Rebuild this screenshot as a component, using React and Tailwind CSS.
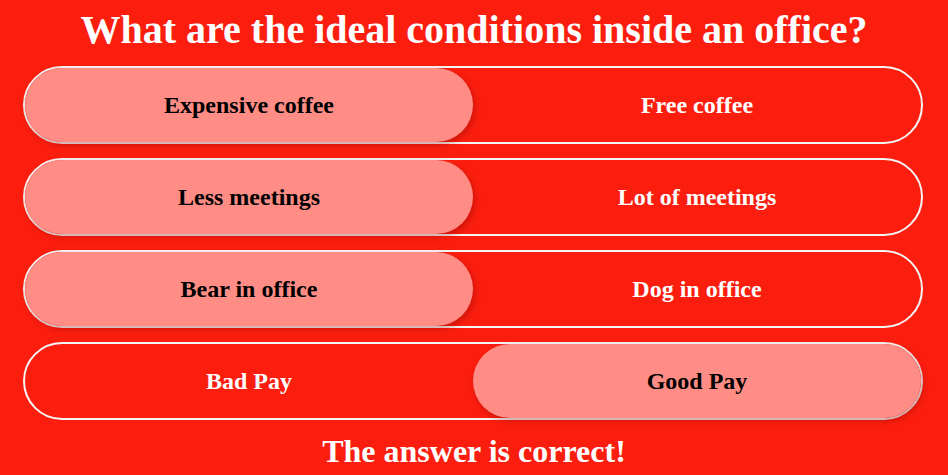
export default function App() {
  const rows = [
    ["Expensive coffee", "Free coffee", 0],
    ["Less meetings", "Lot of meetings", 0],
    ["Bear in office", "Dog in office", 0],
    ["Bad Pay", "Good Pay", 1],
  ];
  return (
    <div className="w-[948px] h-[475px] bg-[#fb1e0f] overflow-hidden flex flex-col items-center" style={{ fontFamily: '"Liberation Serif", "Times New Roman", serif' }}>
      <h1 className="text-[40px] font-bold text-white leading-none mt-[10px]">What are the ideal conditions inside an office?</h1>
      <div className="flex flex-col gap-[14px] mt-[16px] w-[900px] -translate-x-[1px]">
        {rows.map(([a, b, sel], i) => (
          <div key={i} className="h-[78px] rounded-full border-2 border-[#f5f5f5] flex">
            {[a, b].map((t, j) => (
              <div
                key={j}
                className={
                  "flex-1 rounded-full flex items-center justify-center text-[24px] font-bold " +
                  (sel === j ? "bg-[#ff8d85] text-black shadow-[2px_3px_6px_rgba(120,0,0,0.35)]" : "text-white")
                }
              >
                {t}
              </div>
            ))}
          </div>
        ))}
      </div>
      <div className="text-[32px] font-bold text-white leading-none mt-[15px]">The answer is correct!</div>
    </div>
  );
}
